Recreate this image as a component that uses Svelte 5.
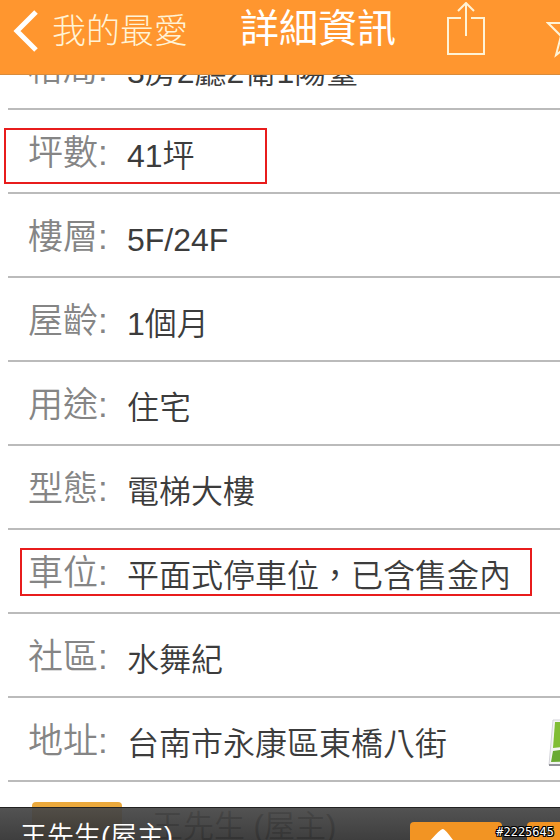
<script>
  let favorite = $state(false);

  const rows = [
    { label: "格局", value: "3房2廳2衛1陽臺" },
    { label: "坪數", value: "41坪", mark: "size" },
    { label: "樓層", value: "5F/24F" },
    { label: "屋齡", value: "1個月" },
    { label: "用途", value: "住宅" },
    { label: "型態", value: "電梯大樓" },
    { label: "車位", value: "平面式停車位，已含售金內", mark: "parking" },
    { label: "社區", value: "水舞紀" },
    { label: "地址", value: "台南市永康區東橋八街", map: true },
  ];
</script>

<div class="screen">
  <header>
    <button class="back">
      <svg width="26" height="42" viewBox="0 0 26 42">
        <path d="M24 2 L5 21 L24 40" fill="none" stroke="#fff" stroke-width="5" />
      </svg>
      我的最愛
    </button>
    <h1>詳細資訊</h1>
    <button class="share" aria-label="分享">
      <svg width="40" height="54" viewBox="0 0 40 54">
        <path
          d="M15 16 H2 V52 H38 V16 H25 M20 34 V1 M12 9 L20 1 L28 9"
          fill="none"
          stroke="#fff3d6"
          stroke-width="2"
        />
      </svg>
    </button>
    <button class="star" aria-label="收藏" onclick={() => (favorite = !favorite)}>
      <svg width="48" height="46" viewBox="0 0 48 46">
        <path
          d="M24 -6 L29 11 H46 L33 24 L38 43 L24 32 L10 43 L15 24 L2 11 H19 Z"
          fill={favorite ? "#fff3d6" : "none"}
          stroke="#fff3d6"
          stroke-width="2"
        />
      </svg>
    </button>
  </header>

  <main>
    <dl>
      {#each rows as row}
        <div class="row">
          <dt>{row.label}:</dt>
          <dd>{row.value}</dd>
          {#if row.mark}
            <span class="mark {row.mark}"></span>
          {/if}
          {#if row.map}
            <button class="map" aria-label="地圖">
              <svg width="50" height="48" viewBox="0 0 50 48">
                <path d="M5 1 L50 1 V46 L1 46 Z" fill="#f4f4f4" stroke="#d4d4da" />
                <path d="M7 3 H50 V24 L5 29 Z" fill="#80bd35" />
                <path d="M5 32 L50 26 V42 L3 43 Z" fill="#69aa32" />
                <path d="M1 46 H50" stroke="#92929a" stroke-width="2" />
              </svg>
            </button>
          {/if}
        </div>
      {/each}
      <div class="row contact">
        <dt><span class="badge"></span></dt>
        <dd>王先生 (屋主)</dd>
      </div>
    </dl>
  </main>

  <footer>
    <span class="owner">王先生(屋主)</span>
    <button class="action" aria-label="電話">
      <svg width="60" height="40" viewBox="0 0 60 40">
        <path d="M19 20 Q31 6 33 7 Q35 7 43 18 L37 30 L56 40 H17 Z" fill="#fff" />
      </svg>
    </button>
    <button class="action" aria-label="訊息"></button>
  </footer>
  <span class="serial">#2225645</span>
</div>

<style>
  :global(body) {
    background: #fff;
    font-family: "Liberation Sans", "Noto Sans CJK TC", sans-serif;
  }

  .screen {
    position: relative;
    height: 100vh;
    overflow: hidden;
    display: flex;
    flex-direction: column;
  }

  button {
    border: 0;
    padding: 0;
    background: none;
    font: inherit;
    color: inherit;
    cursor: pointer;
  }

  svg {
    display: block;
    flex: none;
  }

  header {
    position: relative;
    z-index: 1;
    flex: none;
    display: flex;
    align-items: center;
    box-sizing: border-box;
    height: 75px;
    padding: 0 0 16px 12px;
    background: #ff962f;
    border-bottom: 1px solid #d98c3c;
    color: #fff;
    line-height: 42px;
    white-space: nowrap;
  }

  .back {
    display: flex;
    align-items: center;
    gap: 14px;
    padding-top: 4px;
    font-size: 34px;
    font-weight: 300;
    color: #fff3d6;
  }

  h1 {
    margin: 0 0 0 52px;
    font-size: 39px;
    font-weight: 400;
  }

  .share {
    margin-left: 50px;
  }

  .star {
    margin-left: 60px;
    padding-top: 12px;
  }

  main {
    flex: 1;
    min-height: 0;
  }

  dl {
    margin: -49px 0 0 8px;
  }

  .row {
    position: relative;
    display: flex;
    align-items: center;
    box-sizing: border-box;
    height: 84px;
    padding: 6px 0 0 20px;
    border-bottom: 2px solid #bbb;
    line-height: 40px;
    white-space: nowrap;
  }

  dt {
    width: 99px;
    padding-bottom: 2px;
    font-size: 35px;
    font-weight: 350;
    color: #858585;
  }

  dd {
    margin: 0;
    padding-top: 4px;
    font-size: 32px;
    font-weight: 350;
    color: #3c3c3c;
  }

  .mark {
    position: absolute;
    box-sizing: border-box;
    border: 2px solid #e81c1c;
  }

  .size {
    left: -4px;
    top: 18px;
    width: 263px;
    height: 56px;
  }

  .parking {
    left: 12px;
    top: 18px;
    width: 512px;
    height: 48px;
  }

  .map {
    position: absolute;
    top: 21px;
    left: 540px;
  }

  .contact {
    padding-top: 0;
  }

  .contact dt {
    width: 124px;
  }

  .contact dd {
    padding-top: 8px;
    font-size: 31px;
  }

  .badge {
    display: block;
    width: 90px;
    height: 40px;
    margin-left: 4px;
    border-radius: 4px;
    background: #eba93c;
  }

  footer {
    position: absolute;
    left: 0;
    right: 0;
    bottom: 0;
    display: flex;
    align-items: flex-start;
    box-sizing: border-box;
    height: 33px;
    padding: 14px 0 0 20px;
    border-top: 1px solid #222;
    background: linear-gradient(rgba(72, 72, 72, 0.94), rgba(50, 50, 50, 0.94));
    overflow: hidden;
    white-space: nowrap;
  }

  .owner {
    flex: 1;
    font-size: 27px;
    line-height: 30px;
    font-weight: 350;
    color: #fff;
  }

  .action {
    flex: none;
    display: flex;
    width: 92px;
    height: 48px;
    margin-left: 25px;
    border-radius: 4px;
    background: #f29423;
  }

  .action:last-child {
    margin-right: -59px;
  }

  .serial {
    position: absolute;
    right: 6px;
    bottom: 1px;
    font-family: "DejaVu Sans Mono", monospace;
    font-size: 12px;
    line-height: 14px;
    color: #fff;
    text-shadow: 1px 0 #000, -1px 0 #000, 0 1px #000, 0 -1px #000, 1px 1px #000, -1px -1px #000,
      1px -1px #000, -1px 1px #000;
  }
</style>
